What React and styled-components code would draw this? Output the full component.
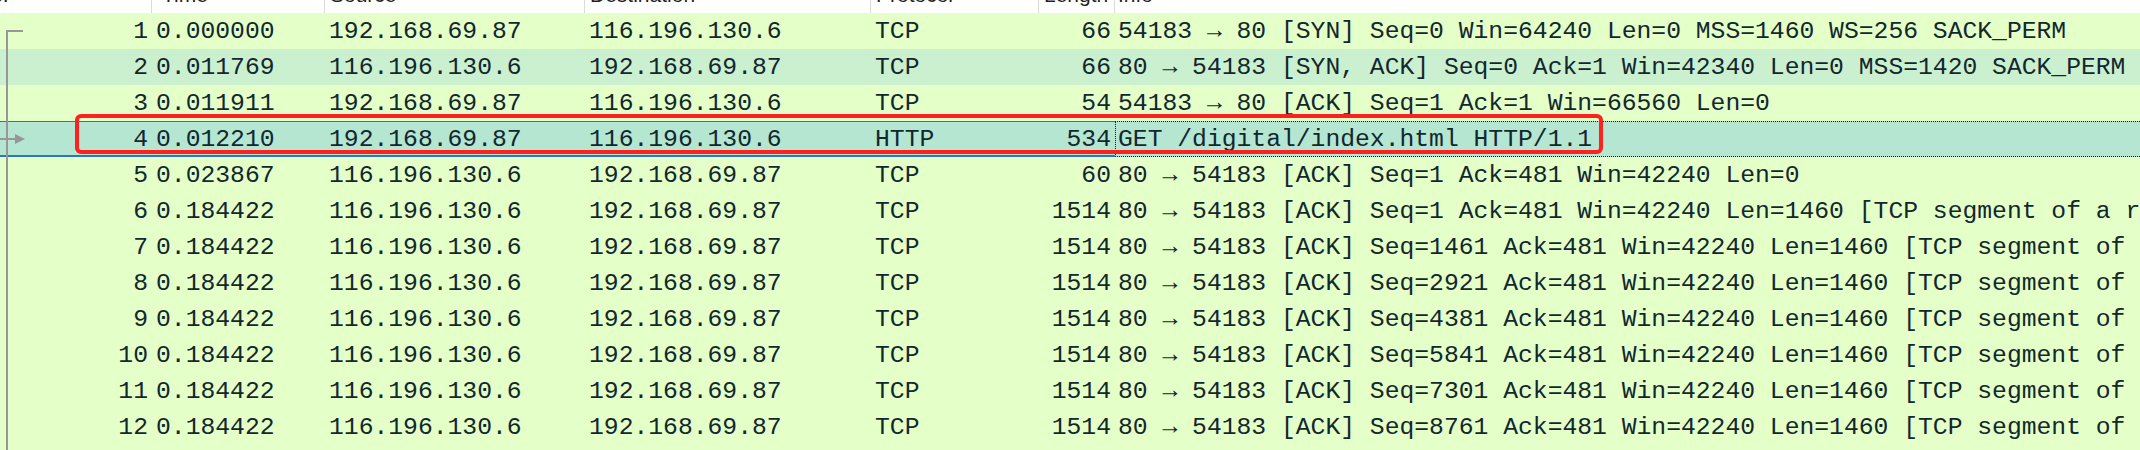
import React from 'react'
import styled, { createGlobalStyle, css } from 'styled-components'

const GlobalStyle = createGlobalStyle`
  html, body {
    margin: 0;
    padding: 0;
    background: #e4ffc7;
  }
`

// No. | Time | Source | Destination | Protocol | Length | Info
const COLUMNS = '152px 173px 260px 286px 168px 76px 1fr'

const ROW_BG = {
  plain: '#e4ffc7',
  hover: '#cbf0d0',
  selected: '#b4e6d2',
}

const Frame = styled.div`
  position: relative;
  width: 2140px;
  height: 450px;
  overflow: hidden;
  background: #e4ffc7;
`

const Table = styled.div`
  width: 2400px;
  display: flex;
  flex-direction: column;
`

const HeaderRow = styled.div`
  display: grid;
  grid-template-columns: ${COLUMNS};
  height: 13px;
  overflow: hidden;
  background: #fff;
`

const HeaderCell = styled.div`
  border-right: 1px solid #dadada;
  padding-left: ${p => p.$indent}px;
  font-family: 'Liberation Sans', Arial, sans-serif;
  font-size: 21px;
  line-height: 21px;
  color: #1f1f1f;
  white-space: nowrap;
  overflow: hidden;

  span {
    display: block;
    margin-top: -16px;
  }
`

const Row = styled.div`
  display: grid;
  grid-template-columns: ${COLUMNS};
  height: 36px;
  background: ${p => ROW_BG[p.$state]};
  font-family: 'Liberation Mono', 'DejaVu Sans Mono', monospace;
  font-size: 24.7px;
  line-height: 36px;
  color: #12272e;
  ${p =>
    p.$state === 'selected' &&
    css`
      box-shadow: inset 0 1px 0 #2f74bf, inset 0 -2px 0 #2f74bf;
    `}
`

const Cell = styled.div`
  white-space: nowrap;
  overflow: hidden;
  text-align: ${p => (p.$right ? 'right' : 'left')};
  padding: ${p => (p.$right ? '0 4px 0 0' : '0 0 0 4px')};
`

const InfoCell = styled.div`
  white-space: nowrap;
  overflow: hidden;
  padding-left: 3px;
  ${p =>
    p.$focused &&
    css`
      background: ${ROW_BG.selected};
      outline: 1px dotted #1a1a1a;
      outline-offset: -1px;
    `}
`

const Tree = styled.svg`
  position: absolute;
  left: 0;
  top: 0;
  pointer-events: none;
`

const Callout = styled.div`
  position: absolute;
  left: 75px;
  top: 114px;
  width: 1528px;
  height: 40px;
  box-sizing: border-box;
  border: 4px solid #ff2020;
  border-radius: 6px;
  pointer-events: none;
`

const headers = [
  { label: 'No.', indent: 0, shift: -24 },
  { label: 'Time', indent: 10 },
  { label: 'Source', indent: 5 },
  { label: 'Destination', indent: 5 },
  { label: 'Protocol', indent: 5 },
  { label: 'Length', indent: 5 },
  { label: 'Info', indent: 3 },
]

const segment = seq =>
  `80 → 54183 [ACK] Seq=${seq} Ack=481 Win=42240 Len=1460 [TCP segment of a reassembled PDU]`

const A = '192.168.69.87'
const B = '116.196.130.6'

const packets = [
  [1, '0.000000', A, B, 'TCP', 66, '54183 → 80 [SYN] Seq=0 Win=64240 Len=0 MSS=1460 WS=256 SACK_PERM'],
  [2, '0.011769', B, A, 'TCP', 66, '80 → 54183 [SYN, ACK] Seq=0 Ack=1 Win=42340 Len=0 MSS=1420 SACK_PERM'],
  [3, '0.011911', A, B, 'TCP', 54, '54183 → 80 [ACK] Seq=1 Ack=1 Win=66560 Len=0'],
  [4, '0.012210', A, B, 'HTTP', 534, 'GET /digital/index.html HTTP/1.1'],
  [5, '0.023867', B, A, 'TCP', 60, '80 → 54183 [ACK] Seq=1 Ack=481 Win=42240 Len=0'],
  [6, '0.184422', B, A, 'TCP', 1514, segment(1)],
  [7, '0.184422', B, A, 'TCP', 1514, segment(1461)],
  [8, '0.184422', B, A, 'TCP', 1514, segment(2921)],
  [9, '0.184422', B, A, 'TCP', 1514, segment(4381)],
  [10, '0.184422', B, A, 'TCP', 1514, segment(5841)],
  [11, '0.184422', B, A, 'TCP', 1514, segment(7301)],
  [12, '0.184422', B, A, 'TCP', 1514, segment(8761)],
]

const stateOf = no => (no === 4 ? 'selected' : no === 2 ? 'hover' : 'plain')

export default function App() {
  return (
    <Frame>
      <GlobalStyle />
      <Table>
        <HeaderRow>
          {headers.map(h => (
            <HeaderCell key={h.label} $indent={h.indent}>
              <span style={h.shift ? { marginLeft: h.shift } : undefined}>{h.label}</span>
            </HeaderCell>
          ))}
        </HeaderRow>
        {packets.map(([no, time, src, dst, proto, len, info]) => {
          const state = stateOf(no)
          return (
            <Row key={no} $state={state}>
              <Cell $right>{no}</Cell>
              <Cell>{time}</Cell>
              <Cell>{src}</Cell>
              <Cell>{dst}</Cell>
              <Cell>{proto}</Cell>
              <Cell $right>{len}</Cell>
              <InfoCell $focused={state === 'selected'}>{info}</InfoCell>
            </Row>
          )
        })}
      </Table>

      <Tree width="30" height="450" viewBox="0 0 30 450">
        <path d="M23 31H7V450" fill="none" stroke="#979797" strokeWidth="2" />
        <path d="M0 139H16" stroke="#979797" strokeWidth="2" />
        <path d="M15 134L25 139L15 144Z" fill="#979797" />
      </Tree>

      <Callout />
    </Frame>
  )
}
